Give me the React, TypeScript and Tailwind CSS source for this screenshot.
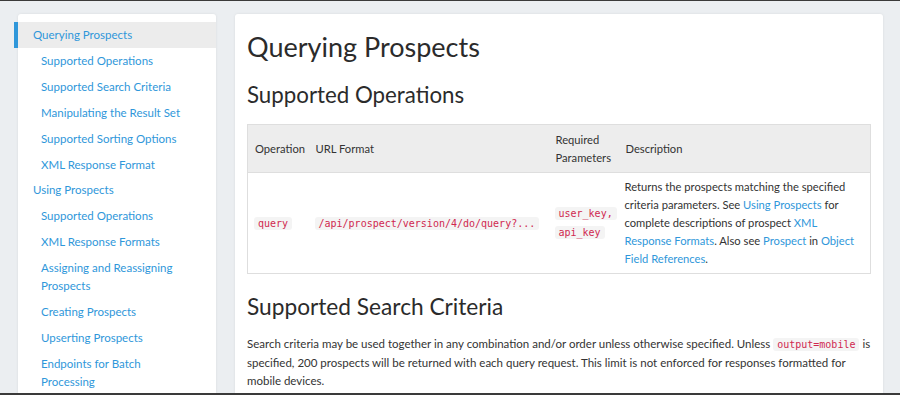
import React from "react";

const font = { fontFamily: "Lato, 'Open Sans', sans-serif" };

type NavItem = { label: string; level: 0 | 1; active?: boolean };

const nav: NavItem[] = [
  { label: "Querying Prospects", level: 0, active: true },
  { label: "Supported Operations", level: 1 },
  { label: "Supported Search Criteria", level: 1 },
  { label: "Manipulating the Result Set", level: 1 },
  { label: "Supported Sorting Options", level: 1 },
  { label: "XML Response Format", level: 1 },
  { label: "Using Prospects", level: 0 },
  { label: "Supported Operations", level: 1 },
  { label: "XML Response Formats", level: 1 },
  { label: "Assigning and Reassigning Prospects", level: 1 },
  { label: "Creating Prospects", level: 1 },
  { label: "Upserting Prospects", level: 1 },
  { label: "Endpoints for Batch Processing", level: 1 },
];

function Code({ children }: { children: React.ReactNode }) {
  return (
    <code className="rounded-[3px] bg-[#f4f4f4] px-[4px] py-[1px] font-['DejaVu_Sans_Mono',monospace] text-[10px] text-[#d0284f]">
      {children}
    </code>
  );
}

function A({ children }: { children: React.ReactNode }) {
  return <a className="text-[#2f97da]">{children}</a>;
}

function Sidebar() {
  return (
    <aside className="relative w-[198px] shrink-0 rounded-t-[3px] bg-white pt-[8px] shadow-[0_0_3px_rgba(0,0,0,0.08)]">
      <ul>
        {nav.map((item, i) => (
          <li
            key={i}
            className={`relative py-[4px] text-[11.5px] leading-[17.9px] text-[#2f97da] ${
              item.level === 0 ? "pl-[15px]" : "pl-[23px] pr-[30px]"
            } ${item.active ? "bg-[#ececec]" : ""}`}
          >
            {item.active && <span className="absolute -left-[4px] top-0 h-full w-[4px] bg-[#2f97da]" />}
            {item.label}
          </li>
        ))}
      </ul>
    </aside>
  );
}

function Main() {
  return (
    <main className="w-[648px] shrink-0 rounded-t-[3px] bg-white px-[12px] pt-[17px] text-[#333] shadow-[0_0_3px_rgba(0,0,0,0.08)]">
      <h1 className="text-[27px] leading-[32px] text-[#2b2b2b]">Querying Prospects</h1>
      <h2 className="mt-[18px] text-[22.3px] leading-[28px] text-[#2b2b2b]">Supported Operations</h2>
      <table className="mt-[15px] w-[624px] border border-[#dedede] text-[11.2px] leading-[18px]">
        <thead className="bg-[#ededed] text-left">
          <tr className="h-[48px] border-b border-[#dedede]">
            <th className="w-[61px] pl-[7px] font-normal">Operation</th>
            <th className="w-[240px] pl-[7px] font-normal">URL Format</th>
            <th className="w-[70px] pl-[7px] font-normal">
              Required
              <br />
              Parameters
            </th>
            <th className="pl-[7px] font-normal">Description</th>
          </tr>
        </thead>
        <tbody>
          <tr>
            <td className="pl-[6px] align-middle">
              <Code>query</Code>
            </td>
            <td className="pl-[6px] align-middle">
              <Code>/api/prospect/version/4/do/query?...</Code>
            </td>
            <td className="pl-[6px] align-middle">
              <Code>user_key,</Code>
              <br />
              <Code>api_key</Code>
            </td>
            <td className="py-[5px] pl-[6px] pr-[4px]">
              Returns the prospects matching the specified criteria parameters. See <A>Using Prospects</A> for
              complete descriptions of prospect <A>XML Response Formats</A>. Also see <A>Prospect</A> in{" "}
              <A>Object Field References</A>.
            </td>
          </tr>
        </tbody>
      </table>
      <h2 className="mt-[19px] text-[22.7px] leading-[28px] text-[#2b2b2b]">Supported Search Criteria</h2>
      <p className="mt-[14px] text-[11.5px] leading-[18px]">
        Search criteria may be used together in any combination and/or order unless otherwise specified. Unless{" "}
        <Code>output=mobile</Code> is specified, 200 prospects will be returned with each query request. This limit
        is not enforced for responses formatted for mobile devices.
      </p>
    </main>
  );
}

export default function App() {
  return (
    <div className="h-[395px] w-[900px] overflow-hidden border-t border-b-2 border-[#3a3a3a] bg-[#ebeef1]" style={font}>
      <div className="flex gap-[19px] pl-[18px] pt-[13px]">
        <Sidebar />
        <Main />
      </div>
    </div>
  );
}
